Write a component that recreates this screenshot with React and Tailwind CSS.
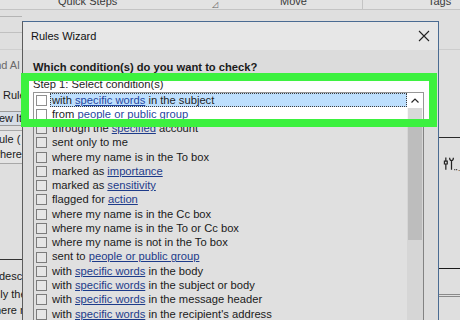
import React from "react";

const font = { fontFamily: '"Liberation Sans", Arial, sans-serif' };

const conditions = [
  "with [specific words] in the subject",
  "from [people or public group]",
  "through the [specified] account",
  "sent only to me",
  "where my name is in the To box",
  "marked as [importance]",
  "marked as [sensitivity]",
  "flagged for [action]",
  "where my name is in the Cc box",
  "where my name is in the To or Cc box",
  "where my name is not in the To box",
  "sent to [people or public group]",
  "with [specific words] in the body",
  "with [specific words] in the subject or body",
  "with [specific words] in the message header",
  "with [specific words] in the recipient's address",
];

// split "a [link] b" into plain and link parts
const parts = (text) =>
  text.split(/(\[[^\]]+\])/).filter(Boolean).map((p, i) =>
    p.startsWith("[") ? (
      <span key={i} className="text-[#1d3b8a] underline underline-offset-[1px]">
        {p.slice(1, -1)}
      </span>
    ) : (
      <span key={i}>{p}</span>
    )
  );

const ConditionRow = ({ text, selected }) => (
  <div className="flex items-center h-[14.27px] pl-[2px]">
    <div className="w-[11px] h-[11px] border border-[#7c7c7c] bg-[#e6e6e6] shrink-0" />
    <div
      className={
        selected
          ? "ml-[3px] flex-1 h-[14px] flex items-center px-[2px] bg-[#a4c2dc] outline outline-1 outline-dotted outline-[#333] -outline-offset-1"
          : "ml-[3px] flex-1 h-[14px] flex items-center px-[2px]"
      }
    >
      <span className="whitespace-nowrap leading-none">{parts(text)}</span>
    </div>
  </div>
);

const ToolsIcon = () => (
  <svg width="16" height="16" viewBox="0 0 16 16" fill="none" stroke="#222" strokeWidth="1.3">
    <path d="M3 1v4M3 5h-1.5v3h3v-3zM3 8v6" />
    <path d="M7 1.5c0 2 1 3 2 3s2-1 2-3M9 4.5v9.5" />
    <path d="M12 14h1M14 14h1" />
  </svg>
);

const App = () => (
  <div
    className="relative w-[460px] h-[320px] overflow-hidden bg-[#dfdfdf] text-[#1a1a1a]"
    style={font}
  >
    {/* ribbon group labels */}
    <div className="flex h-[10px] border-b border-[#c4c4c4] bg-[#e3e3e3] text-[11px] text-[#3a3a3a] leading-none">
      <div className="w-[212px] pl-[58px] -mt-[4px]">Quick Steps</div>
      <div className="w-[68px] pt-[1px] text-[8px] text-[#666]">◿</div>
      <div className="w-[83px] -mt-[4px] border-r border-[#c4c4c4]">Move</div>
      <div className="w-[65px]" />
      <div className="-mt-[4px]">Tags</div>
    </div>

    <div className="flex h-[310px]">
      {/* left pane, mostly under the dialog */}
      <div className="w-[22px] flex flex-col text-[11px] leading-none overflow-hidden">
        <div className="h-[7px] border-b border-[#b4b4b4]" />
        <div className="h-[16px] border-b border-[#c0c0c0]" />
        <div className="h-[17px] border-b border-[#cfcfcf]" />
        <div className="mt-[10px] -ml-[14px] text-[#6a6a6a] whitespace-nowrap">Find Al</div>
        <div className="mt-[19px] ml-[3px] whitespace-nowrap">Rules</div>
        <div className="mt-[10px] h-[15px] flex items-center -ml-[9px] border-y border-[#9a9a9a] bg-[#d6dde6] whitespace-nowrap">
          New Item
        </div>
        <div className="mt-[4px] h-[34px] border-y border-[#a8a8a8] bg-[#e4e4e4] flex flex-col justify-center gap-[4px] whitespace-nowrap">
          <div className="-ml-[9px]">Rule (</div>
          <div className="-ml-[8px]">where</div>
        </div>
        <div className="mt-[95px] border-t border-[#333]" />
        <div className="mt-[11px] -ml-[1px] whitespace-nowrap">description</div>
        <div className="mt-[7px] -ml-[12px] whitespace-nowrap">only the</div>
        <div className="mt-[5px] -ml-[13px] whitespace-nowrap">where m</div>
      </div>

      <div className="flex-1" />

      {/* right pane */}
      <div className="w-[21px] flex flex-col">
        <div className="h-[40px] border-b border-[#cdcdcd]" />
        <div className="h-[88px] border-b border-[#2a2a2a]" />
        <div className="mt-[18px] ml-[4px] flex items-end">
          <ToolsIcon />
          <span className="text-[7px] leading-none tracking-[-1px]">..</span>
        </div>
        <div className="mt-[96px] border-t border-[#1a1a1a]" />
        <div className="mt-[25px] h-[3px] border-y border-[#8a8a8a]" />
      </div>
    </div>

    {/* Rules Wizard dialog */}
    <div className="absolute left-[22px] top-[21px] w-[417px] h-[320px] flex flex-col border border-[#4a6b92] border-l-[#5c5c5c] bg-[#dcdcdc]">
      <div className="h-[28px] flex items-center justify-between pl-[8px] pr-[8px] bg-[#e7e7e7]">
        <span className="text-[11px] text-[#111]">Rules Wizard</span>
        <svg width="12" height="12" viewBox="0 0 12 12" stroke="#222" strokeWidth="1.1">
          <path d="M1 1l10 10M11 1L1 11" />
        </svg>
      </div>
      <div className="flex-1 flex flex-col pl-[10px] pr-[14px] pt-[10px] text-[11.2px]">
        <div className="h-[14px] flex items-center font-bold whitespace-nowrap">
          Which condition(s) do you want to check?
        </div>
        <div className="h-[14px] mt-[3px] flex items-center whitespace-nowrap">
          Step 1: Select condition(s)
        </div>
        <div className="mt-[1px] flex border border-[#828282] bg-[#e0e0e0]">
          <div className="flex-1 flex flex-col">
            {conditions.map((c, i) => (
              <ConditionRow key={i} text={c} selected={i === 0} />
            ))}
          </div>
          <div className="w-[16px] flex flex-col bg-[#d6d6d6]">
            <div className="h-[15px] flex items-center justify-center bg-[#e0e0e0]">
              <svg width="8" height="5" viewBox="0 0 8 5" fill="none" stroke="#222" strokeWidth="1.2">
                <path d="M0.5 4.5L4 1l3.5 3.5" />
              </svg>
            </div>
            <div className="h-[132px] mx-[1px] bg-[#bdbdbd]" />
          </div>
        </div>
      </div>
    </div>

    {/* green annotation over the first two conditions */}
    <div className="absolute left-[21px] top-[73px] w-[416px] h-[54px] border-[8px] border-[#3cf13f] backdrop-brightness-[1.15]" />
  </div>
);

export default App;
